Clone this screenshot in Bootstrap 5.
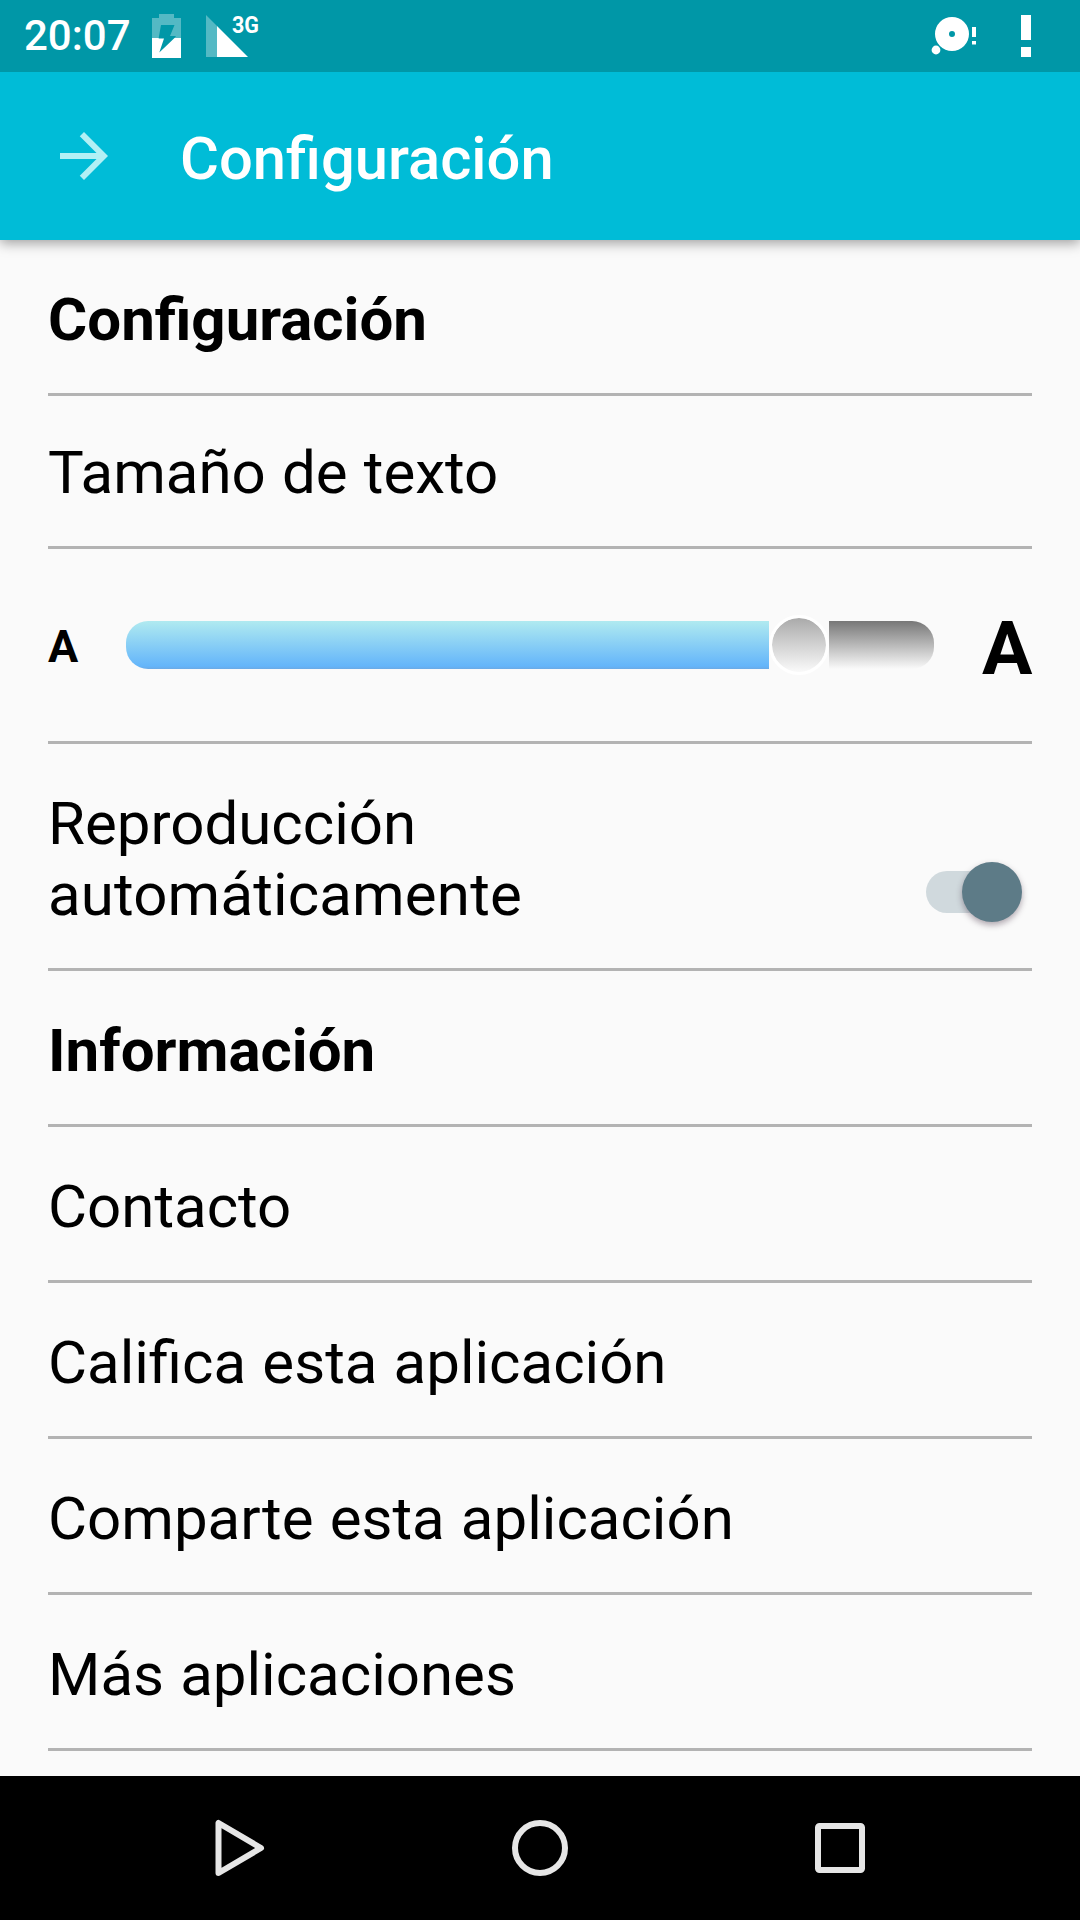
<!DOCTYPE html>
<html lang="es">
<head>
<meta charset="utf-8">
<meta name="viewport" content="width=device-width, initial-scale=1">
<title>Configuración</title>
<link href="https://cdn.jsdelivr.net/npm/bootstrap@5.3.0/dist/css/bootstrap.min.css" rel="stylesheet">
<style>
  body { font-family: Roboto, "Noto Sans", sans-serif; color: #000; background: #fafafa; font-size: 60px; line-height: 71px; word-spacing: 1.3px; }
  svg { display: block; flex: none; }
  .screen { height: 1920px; width: 1080px; }
  .status { height: 72px; background: #0097a7; padding: 0 49px 0 24px; z-index: 3; }
  .clock { font-size: 42px; font-weight: 500; line-height: 72px; width: 128px; }
  .appbar { height: 168px; background: #00bcd7; padding: 0 48px; box-shadow: 0 3px 12px rgba(0,0,0,.38); z-index: 2; }
  .bar-title { font-weight: 500; font-size: 59.7px; line-height: 71px; margin: 6px 0 0 60px; }
  .settings { padding: 0 48px; }
  .item { border-bottom: 3px solid #b3b3b3; height: 156px; padding-bottom: 38px; }
  .item h2 { font-size: 60px; line-height: 71px; font-weight: 700; }
  .item-first-option { height: 153px; }
  .item-slider { height: 195px; padding: 0; }
  .item-switch { height: 227px; }
  .a-small { font-size: 45px; line-height: 52px; width: 30px; padding-top: 4px; }
  .a-large { font-size: 75px; line-height: 88px; width: 50px; padding-top: 6px; }
  .slider { width: 808px; height: 60px; margin: 0 48px; }
  .track-fill { height: 48px; border-radius: 22px 0 0 22px; background: linear-gradient(#b0eaf0, #64b5fa 94%, #6baae6); }
  .track-rest { height: 48px; border-radius: 0 22px 22px 0; background: linear-gradient(#777, #fafafa); }
  .thumb { width: 60px; height: 60px; border-radius: 50%; border: 3px solid #fff; background: linear-gradient(#aaa, #fafafa) padding-box; }
  .label-wide { letter-spacing: .16px; }
  .toggle { width: 95.500px; height: 60px; margin: 0 10.500px 8.500px 0; }
  .toggle-track { width: 84px; height: 42px; border-radius: 21px; background: #d0d9dd; }
  .toggle-thumb { right: 0; top: 0; width: 60px; height: 60px; border-radius: 50%; background: #5d7b87; box-shadow: 0 3px 6px rgba(60,40,60,.4); }
  .navkeys { height: 144px; background: #000; padding: 0 90px; }
</style>
</head>
<body>
<div class="screen d-flex flex-column overflow-hidden">
  <div class="status d-flex align-items-center justify-content-between position-relative">
    <div class="d-flex">
      <span class="clock text-white">20:07</span>
      <svg width="29" height="72" viewBox="152 0 29 72">
        <path fill="#fff" fill-opacity=".33" d="M152 18h7v-4h15v4h7v20h-6.500L176 36h-6l4.500-11H161L158.700 38H152z"/>
        <path fill="#fff" d="M152 38h6.700v.5H164L159.300 52.500L174.500 38H181V58H152z"/>
      </svg>
      <svg class="ms-4" width="60" height="72" viewBox="205 0 60 72">
        <path fill="#fff" fill-opacity=".33" d="M206 15l11 11v31h-11z"/>
        <path fill="#fff" d="M217 26l31 31h-31z"/>
        <text x="232" y="33" font-size="24" font-weight="700" fill="#fff" textLength="27" lengthAdjust="spacingAndGlyphs">3G</text>
      </svg>
    </div>
    <svg width="100" height="72" viewBox="931 0 100 72" fill="#fff">
      <path fill-rule="evenodd" d="M952 17a17 17 0 1 1 0 34a17 17 0 1 1 0-34zM952 31a3 3 0 1 0 0 6a3 3 0 1 0 0-6z"/>
      <circle cx="936" cy="50" r="4.400"/>
      <path d="M972 27h4v10h-4zM972 41h4v3.500h-4zM1021 15h10v25h-10zM1021 47h10v10h-10z"/>
    </svg>
  </div>

  <header class="appbar d-flex align-items-center position-relative">
    <svg width="72" height="72" viewBox="0 0 24 24"><path fill="#b2f0f5" d="M12 4l-1.410 1.410L16.170 11H4v2h12.170l-5.580 5.590L12 20l8-8z"/></svg>
    <h1 class="bar-title text-white">Configuración</h1>
  </header>

  <main class="settings flex-grow-1">
    <div class="item d-flex align-items-end"><h2 class="m-0">Configuración</h2></div>
    <div class="item item-first-option d-flex align-items-end">Tamaño de texto</div>
    <div class="item item-slider d-flex align-items-center">
      <span class="a-small fw-bold">A</span>
      <div class="slider d-flex align-items-center">
        <div class="track-fill" style="width:643px"></div>
        <div class="thumb"></div>
        <div class="track-rest flex-grow-1"></div>
      </div>
      <span class="a-large fw-bold">A</span>
    </div>
    <div class="item item-switch d-flex align-items-end justify-content-between">
      <div>Reproducción<br><span class="label-wide">automáticamente</span></div>
      <div class="toggle position-relative d-flex align-items-center">
        <div class="toggle-track"></div>
        <div class="toggle-thumb position-absolute"></div>
      </div>
    </div>
    <div class="item d-flex align-items-end"><h2 class="m-0">Información</h2></div>
    <div class="item d-flex align-items-end">Contacto</div>
    <div class="item d-flex align-items-end">Califica esta aplicación</div>
    <div class="item d-flex align-items-end">Comparte esta aplicación</div>
    <div class="item d-flex align-items-end">Más aplicaciones</div>
  </main>

  <nav class="navkeys d-flex align-items-center">
    <div class="flex-fill d-flex justify-content-center"><svg width="60" height="60" viewBox="0 0 60 60" fill="none" stroke="#e6e6e6" stroke-width="6" stroke-linejoin="round"><path d="M8.500 5v50L51 30z"/></svg></div>
    <div class="flex-fill d-flex justify-content-center"><svg width="60" height="60" viewBox="0 0 60 60" fill="none" stroke="#e6e6e6" stroke-width="6"><circle cx="30" cy="30" r="25"/></svg></div>
    <div class="flex-fill d-flex justify-content-center"><svg width="60" height="60" viewBox="0 0 60 60" fill="none" stroke="#e6e6e6" stroke-width="6"><rect x="8" y="8" width="44" height="44" rx="1.500"/></svg></div>
  </nav>
</div>
<script src="https://cdn.jsdelivr.net/npm/bootstrap@5.3.0/dist/js/bootstrap.bundle.min.js"></script>
</body>
</html>
